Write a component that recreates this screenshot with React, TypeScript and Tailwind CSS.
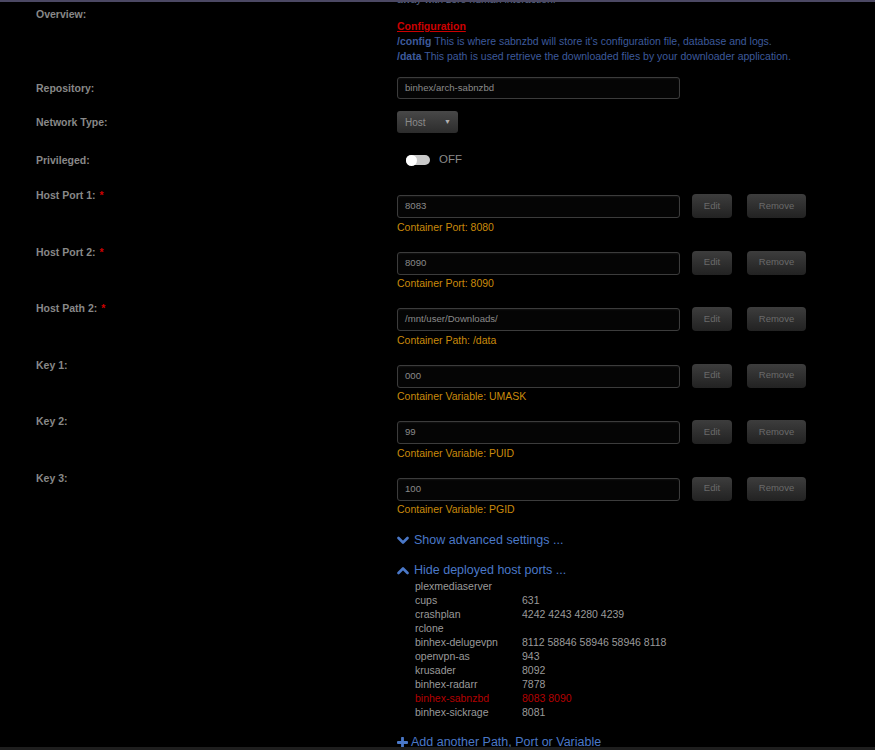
import React from "react";

const labelCls = "w-[361px] shrink-0 font-bold text-[10.5px] leading-[15px] text-[#888888]";

function Star() {
  return <span className="text-[#cc0000] ml-[4px]">*</span>;
}

function PortRow({ label, value, sub, star }: { label: string; value: string; sub: string; star?: boolean }) {
  return (
    <div className="flex">
      <div className={labelCls}>
        {label}
        {star && <Star />}
      </div>
      <div className="pt-[7px]">
        <div className="flex items-start">
          <div className="w-[283px] h-[23px] rounded-[3px] border border-[#3c3c3c] bg-[#050505] shadow-[inset_0_1px_2px_rgba(255,255,255,0.06)] flex items-center pl-[7px] text-[9.6px] text-[#8a8a8a]">
            {value}
          </div>
          <button className="ml-[12px] -mt-[1px] w-[40px] h-[24px] rounded-[4px] bg-gradient-to-b from-[#3d3d3d] to-[#222222] text-[9.5px] text-[#6a6a6a] shadow-[0_1px_1px_rgba(0,0,0,0.6)]">
            Edit
          </button>
          <button className="ml-[15px] -mt-[1px] w-[59px] h-[24px] rounded-[4px] bg-gradient-to-b from-[#3d3d3d] to-[#222222] text-[9.5px] text-[#6a6a6a] shadow-[0_1px_1px_rgba(0,0,0,0.6)]">
            Remove
          </button>
        </div>
        <div className="mt-[1.5px] text-[10.5px] leading-[15px] text-[#c98a0b]">{sub}</div>
      </div>
    </div>
  );
}

function ChevronDown() {
  return (
    <svg width="12" height="9" viewBox="0 0 12 9" className="mr-[5px]">
      <path d="M1.5 2 L6 6.5 L10.5 2" fill="none" stroke="#4a78c8" strokeWidth="2.6" strokeLinecap="round" strokeLinejoin="round" />
    </svg>
  );
}

function ChevronUp() {
  return (
    <svg width="12" height="9" viewBox="0 0 12 9" className="mr-[5px]">
      <path d="M1.5 7 L6 2.5 L10.5 7" fill="none" stroke="#4a78c8" strokeWidth="2.6" strokeLinecap="round" strokeLinejoin="round" />
    </svg>
  );
}

function Plus() {
  return (
    <svg width="11" height="11" viewBox="0 0 11 11" className="mr-[3px]">
      <path d="M5.5 1 V10 M1 5.5 H10" fill="none" stroke="#4a78c8" strokeWidth="2.8" strokeLinecap="round" />
    </svg>
  );
}

const ports: [string, string, boolean?][] = [
  ["plexmediaserver", ""],
  ["cups", "631"],
  ["crashplan", "4242 4243 4280 4239"],
  ["rclone", ""],
  ["binhex-delugevpn", "8112 58846 58946 58946 8118"],
  ["openvpn-as", "943"],
  ["krusader", "8092"],
  ["binhex-radarr", "7878"],
  ["binhex-sabnzbd", "8083 8090", true],
  ["binhex-sickrage", "8081"],
];

export default function App() {
  return (
    <div
      className="w-[875px] h-[750px] bg-black flex flex-col overflow-hidden"
      style={{ fontFamily: '"Liberation Sans", Arial, sans-serif' }}
    >
      <div className="h-[2px] shrink-0 bg-[#4b4863] relative z-10" />
      <div className="flex-1 overflow-hidden pl-[36px]">
        <div className="flex -mt-[10px]">
          <div className="w-[361px] shrink-0" />
          <div className="text-[10.5px] leading-[15px] text-[#5a6a8a]">away with zero human interaction.</div>
        </div>

        {/* Overview */}
        <div className="flex">
          <div className={labelCls}>Overview:</div>
          <div className="pt-[12px] text-[10.5px] leading-[15px] text-[#3d5a9c]">
            <div className="font-bold text-[#cc0000] underline">Configuration</div>
            <div>
              <span className="font-bold">/config</span> This is where sabnzbd will store it's configuration file, database and logs.
            </div>
            <div>
              <span className="font-bold">/data</span> This path is used retrieve the downloaded files by your downloader application.
            </div>
          </div>
        </div>

        {/* Repository */}
        <div className="flex items-center mt-[13px]">
          <div className={labelCls}>Repository:</div>
          <div className="w-[283px] h-[22px] rounded-[3px] border border-[#3c3c3c] bg-[#050505] shadow-[inset_0_1px_2px_rgba(255,255,255,0.06)] flex items-center pl-[7px] text-[9.6px] text-[#8a8a8a]">
            binhex/arch-sabnzbd
          </div>
        </div>

        {/* Network Type */}
        <div className="flex items-center mt-[12px]">
          <div className={labelCls}>Network Type:</div>
          <div className="w-[61px] h-[22px] rounded-[3px] bg-gradient-to-b from-[#484848] to-[#2c2c2c] flex items-center justify-between pl-[8px] pr-[7px] text-[10px] text-[#8a8a8a]">
            <span>Host</span>
            <span className="text-[7px] text-[#b0b0b0]">▼</span>
          </div>
        </div>

        {/* Privileged */}
        <div className="flex items-center mt-[17px] h-[20px]">
          <div className={labelCls}>Privileged:</div>
          <div className="flex items-center pl-[9px]">
            <div className="w-[24px] h-[10px] rounded-full bg-[#c9c9c9] flex items-center">
              <div className="w-[11px] h-[11px] rounded-full bg-white" />
            </div>
            <span className="ml-[9px] text-[11.5px] text-[#8a8a8a]">OFF</span>
          </div>
        </div>

        <div className="mt-[18px] flex flex-col gap-[10px]">
          <PortRow label="Host Port 1:" star value="8083" sub="Container Port: 8080" />
          <PortRow label="Host Port 2:" star value="8090" sub="Container Port: 8090" />
          <PortRow label="Host Path 2:" star value="/mnt/user/Downloads/" sub="Container Path: /data" />
          <PortRow label="Key 1:" value="000" sub="Container Variable: UMASK" />
          <PortRow label="Key 2:" value="99" sub="Container Variable: PUID" />
          <PortRow label="Key 3:" value="100" sub="Container Variable: PGID" />
        </div>

        <div className="flex">
          <div className="w-[361px] shrink-0" />
          <div>
            <div className="mt-[15.5px] flex items-center text-[12.5px] leading-[15px] text-[#4a78c8]">
              <ChevronDown />
              Show advanced settings ...
            </div>
            <div className="mt-[15px] flex items-center text-[12.5px] leading-[15px] text-[#4a78c8]">
              <ChevronUp />
              Hide deployed host ports ...
            </div>
            <div className="mt-[1.5px] pl-[18px] text-[10.5px] leading-[14px]">
              {ports.map(([name, p, hl]) => (
                <div key={name} className={"flex " + (hl ? "text-[#b30000]" : "text-[#9a9a9a]")}>
                  <div className="w-[107px]">{name}</div>
                  <div>{p}</div>
                </div>
              ))}
            </div>
            <div className="mt-[15.5px] flex items-center text-[12.5px] leading-[15px] text-[#4a78c8]">
              <Plus />
              Add another Path, Port or Variable
            </div>
          </div>
        </div>
      </div>
      <div className="h-[3px] shrink-0 bg-[#1e1e1e]" />
    </div>
  );
}
